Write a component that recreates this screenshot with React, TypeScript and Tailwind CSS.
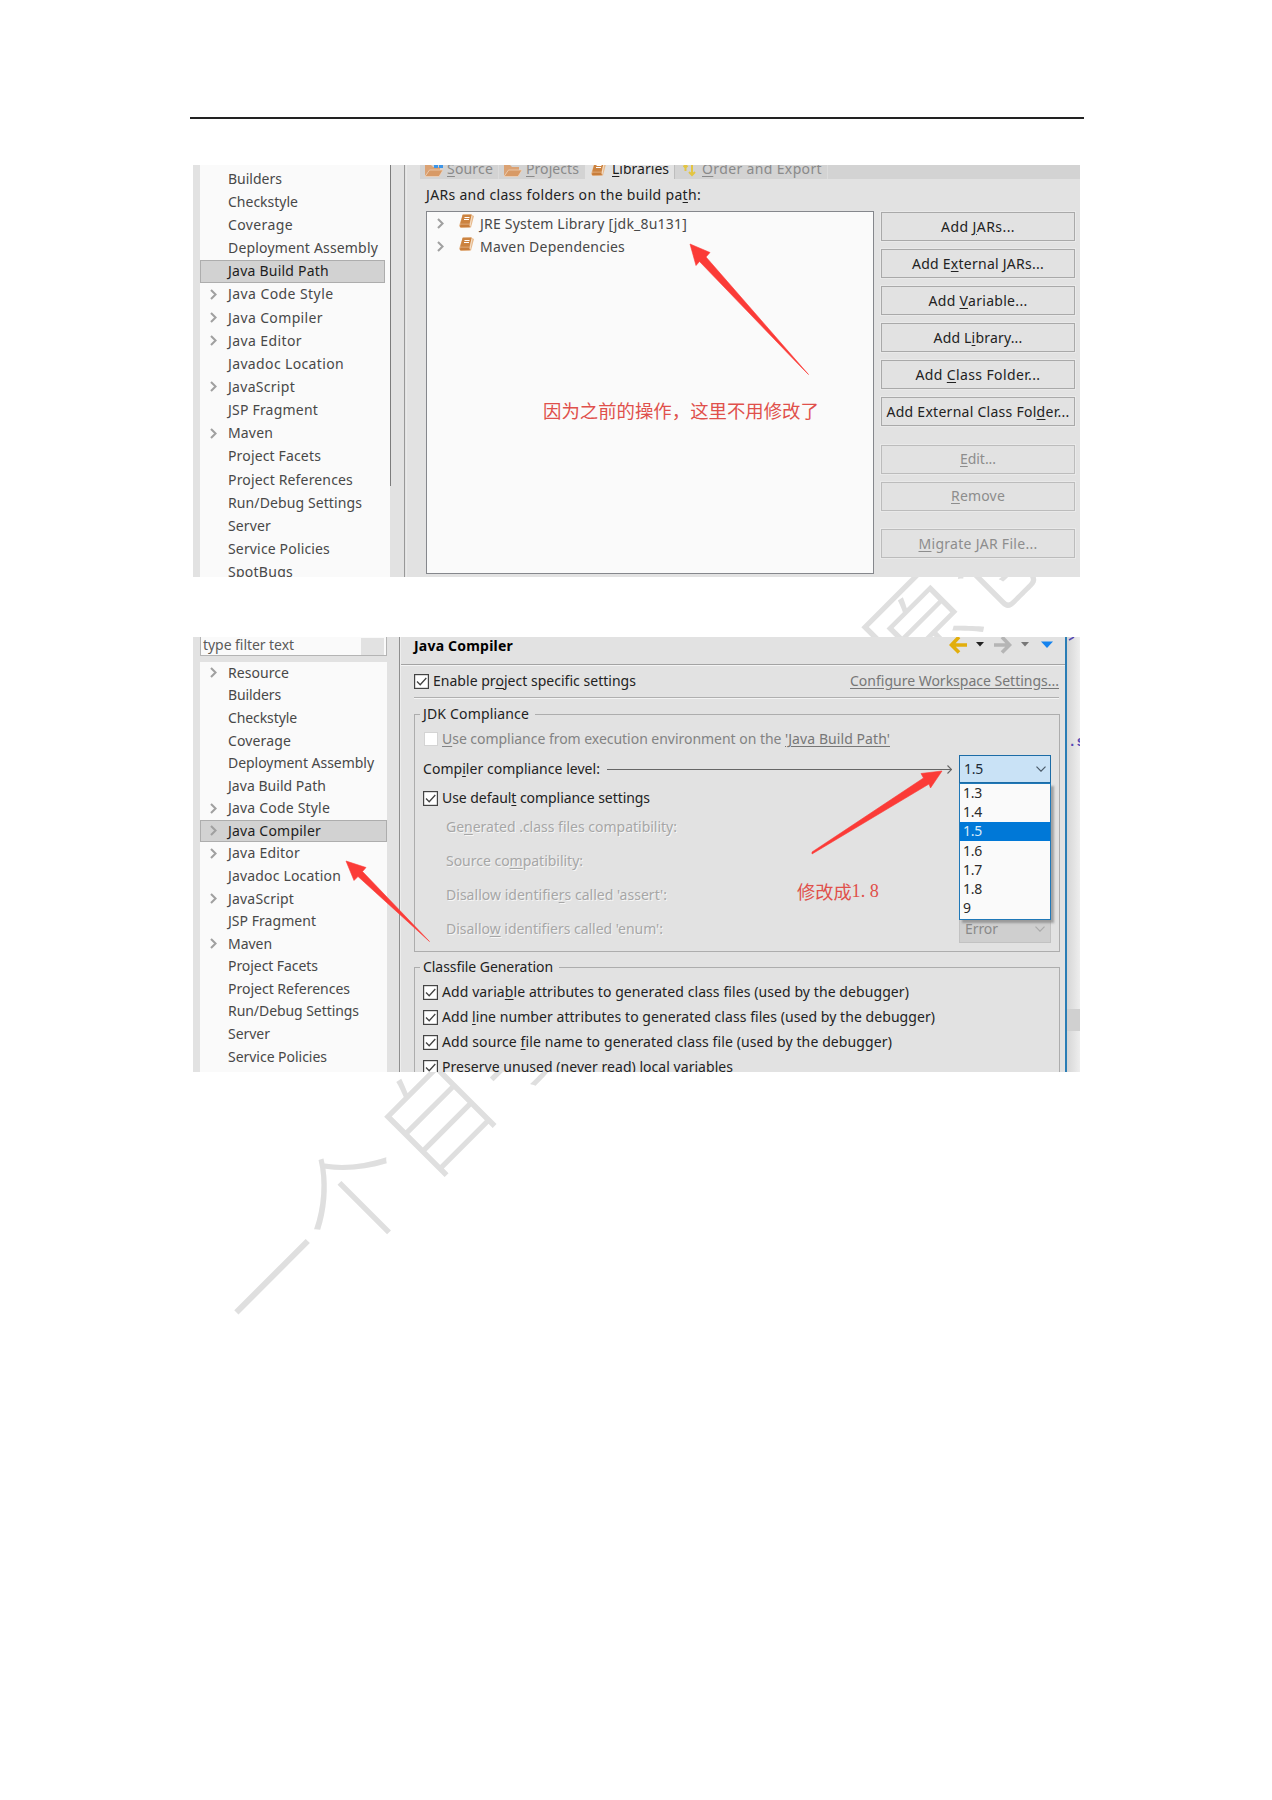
import { useLayoutEffect, useRef, useState } from "react";
import type { ReactNode } from "react";

type LabelProps = { text: string; w: number; className?: string };

/** Text run tracked to a given width; "&" marks the mnemonic letter. */
function Label({ text, w, className = "" }: LabelProps) {
  const ref = useRef<HTMLSpanElement>(null);
  const [spacing, setSpacing] = useState(0);
  const at = text.indexOf("&");
  const length = at < 0 ? text.length : text.length - 1;
  useLayoutEffect(() => {
    if (ref.current) {
      ref.current.style.letterSpacing = "0px";
      const next = (w - ref.current.getBoundingClientRect().width) / length;
      ref.current.style.letterSpacing = `${next}px`;
      setSpacing(next);
    }
  }, [w, length]);
  return (
    <span ref={ref} className={`inline-block whitespace-pre ${className}`} style={{ letterSpacing: `${spacing}px` }}>
      {at < 0 ? (
        text
      ) : (
        <>
          {text.slice(0, at)}
          <span className="underline underline-offset-2">{text[at + 1]}</span>
          {text.slice(at + 2)}
        </>
      )}
    </span>
  );
}

function Chevron() {
  return (
    <svg className="h-[11px] w-[7px] shrink-0" viewBox="0 0 7 11" fill="none" stroke="#a0a0a0" strokeWidth="2.1">
      <path d="M1 1l4.6 4.5L1 10" />
    </svg>
  );
}

function Folder({ badge = false }: { badge?: boolean }) {
  return (
    <svg className="h-4 w-[19px] shrink-0" viewBox="0 0 19 16">
      <path d="M1 4h6l2 2h7v3H6l-5 6z" fill="#dba273" />
      <path d="M5.5 9H19l-4 6.500H1z" fill="#d89a66" stroke="#f0d6bf" strokeWidth=".7" />
      {badge && <path d="M10 3h4v4h-4zM15 3h4v4h-4z" fill="#3d95e8" />}
    </svg>
  );
}

function Book() {
  return (
    <svg className="h-[15px] w-[15px] shrink-0" viewBox="0 0 15 15">
      <path d="M3.500 1L12 .5 15 2l-3 11.500L2 14 0 12z" fill="#e7b98c" />
      <path d="M3.700 .5h9L10.500 9.800H1.300z" fill="#cc8340" />
      <path d="M1.300 10.500h9.500v2.800H1z" fill="#c87d3b" />
      <path d="M5.500 3.500h5M5 5.500h5" stroke="#fff" strokeWidth="1.100" />
      <path d="M13 1.500L11 12" stroke="#f8ead9" strokeWidth=".8" />
    </svg>
  );
}

function Checkbox({ disabled = false }: { disabled?: boolean }) {
  if (disabled) return <span className="ml-px mr-1 size-[14px] shrink-0 border border-[#d4d4d4] bg-white" />;
  return (
    <svg className="mr-1 size-[15px] shrink-0" viewBox="0 0 15 15" fill="none" stroke="#444">
      <rect x=".6" y=".6" width="13.800" height="13.800" fill="#fff" strokeWidth="1.200" />
      <path d="M3 7.500l3.200 3.200L12.300 4" strokeWidth="1.300" />
    </svg>
  );
}

type Item = { t: string; w: number; open?: boolean; sel?: boolean };

const buildTree: Item[] = [
  { t: "Builders", w: 54 },
  { t: "Checkstyle", w: 70 },
  { t: "Coverage", w: 65 },
  { t: "Deployment Assembly", w: 150 },
  { t: "Java Build Path", w: 101, sel: true },
  { t: "Java Code Style", w: 105.5, open: true },
  { t: "Java Compiler", w: 95, open: true },
  { t: "Java Editor", w: 74, open: true },
  { t: "Javadoc Location", w: 116 },
  { t: "JavaScript", w: 67, open: true },
  { t: "JSP Fragment", w: 90 },
  { t: "Maven", w: 45, open: true },
  { t: "Project Facets", w: 93 },
  { t: "Project References", w: 125 },
  { t: "Run/Debug Settings", w: 134 },
  { t: "Server", w: 43 },
  { t: "Service Policies", w: 102 },
  { t: "SpotBugs", w: 65 },
];

const compilerTree: Item[] = [
  { t: "Resource", w: 61, open: true },
  { t: "Builders", w: 53 },
  { t: "Checkstyle", w: 69 },
  { t: "Coverage", w: 63 },
  { t: "Deployment Assembly", w: 146 },
  { t: "Java Build Path", w: 98 },
  { t: "Java Code Style", w: 102, open: true },
  { t: "Java Compiler", w: 93, open: true, sel: true },
  { t: "Java Editor", w: 72, open: true },
  { t: "Javadoc Location", w: 113 },
  { t: "JavaScript", w: 66, open: true },
  { t: "JSP Fragment", w: 88 },
  { t: "Maven", w: 44, open: true },
  { t: "Project Facets", w: 90 },
  { t: "Project References", w: 122 },
  { t: "Run/Debug Settings", w: 131 },
  { t: "Server", w: 42 },
  { t: "Service Policies", w: 99 },
];

function Tree({ items, rowClass, selClass }: { items: Item[]; rowClass: string; selClass: string }) {
  return (
    <ul>
      {items.map((it) => (
        <li
          key={it.t}
          className={`flex items-center border pl-[9px] ${rowClass} ${
            it.sel ? `border-[#adadad] bg-[#d2d2d2] text-[#1d1d1d] ${selClass}` : "border-transparent text-[#484848]"
          }`}
        >
          <span className="flex w-[18px] shrink-0">{it.open && <Chevron />}</span>
          <Label text={it.t} w={it.w} />
        </li>
      ))}
    </ul>
  );
}

const buttonGroups: { t: string; w: number; off?: boolean }[][] = [
  [
    { t: "Add &JARs...", w: 74 },
    { t: "Add E&xternal JARs...", w: 132 },
    { t: "Add &Variable...", w: 99 },
    { t: "Add L&ibrary...", w: 89 },
    { t: "Add &Class Folder...", w: 125 },
    { t: "Add External Class Fol&der...", w: 183 },
  ],
  [
    { t: "&Edit...", w: 36, off: true },
    { t: "&Remove", w: 54, off: true },
  ],
  [{ t: "&Migrate JAR File...", w: 119, off: true }],
];

function BuildPathShot() {
  return (
    <section className="relative flex h-[412px] w-[887px] overflow-hidden bg-[#e2e2e2]">
      <div className="ml-[7px] h-full w-[190px] shrink-0 bg-[#fafafa] pt-[2px]">
        <Tree items={buildTree} rowClass="h-[23.17px]" selClass="mr-[5px]" />
      </div>
      <div className="h-[321px] w-px shrink-0 bg-[#7c7c7c]" />
      <div className="h-full w-[14px] shrink-0 border-r border-[#989898]" />
      <div className="ml-px flex w-full flex-col border-l border-[#e9e9e9] pl-[13px]">
        <div className="flex h-[14px] items-end bg-[#d3d3d3] text-[#8a8a8a]">
          <div className="flex h-[20px] w-[79px] shrink-0 items-center border-r border-[#dcdcdc] pl-[4px]">
            <Folder badge />
            <Label className="ml-1" text="&Source" w={46} />
          </div>
          <div className="flex h-[20px] w-[86px] shrink-0 items-center pl-[4px]">
            <Folder />
            <Label className="ml-1" text="&Projects" w={53} />
          </div>
          <div className="flex h-[20px] w-[90px] shrink-0 items-center border-r border-[#bdbdbd] bg-[#e2e2e2] pl-[6px] text-[#1c1c1c]">
            <Book />
            <Label className="ml-[6px]" text="&Libraries" w={57} />
          </div>
          <div className="flex h-[20px] w-[153px] shrink-0 items-center border-r border-[#dcdcdc] pl-[8px]">
            <svg className="h-[15px] w-[13px] shrink-0" viewBox="0 0 13 15" fill="none" stroke="#e3c542" strokeWidth="2">
              <path d="M2.500 9V3M0.500 5l2-2 2 2M9 3v10M6 10l3 3 3-3" />
            </svg>
            <Label className="ml-[6px]" text="&Order and Export" w={120} />
          </div>
        </div>
        <div className="flex h-[32px] items-center pl-[6px] text-[#222]">
          <Label text="JARs and class folders on the build pa&th:" w={275} />
        </div>
        <div className="flex pl-[6px]">
          <div className="h-[363px] w-[448px] shrink-0 border border-[#85878c] bg-[#fafafa] text-[#484848]">
            {[
              { t: "JRE System Library [jdk_8u131]", w: 207 },
              { t: "Maven Dependencies", w: 145 },
            ].map((r) => (
              <div key={r.t} className="flex h-[23.200px] items-center pl-[10px]">
                <Chevron />
                <span className="-mt-1 ml-[15px] mr-[6px] flex">
                  <Book />
                </span>
                <Label text={r.t} w={r.w} />
              </div>
            ))}
          </div>
          <div className="ml-[7px] mt-[1px] flex w-[194px] shrink-0 flex-col gap-[18.500px]">
            {buttonGroups.map((group) => (
              <div key={group[0].t} className="flex flex-col gap-[8px]">
                {group.map((b) => (
                  <button
                    key={b.t}
                    className={`flex h-[29px] items-center justify-center border outline outline-[#e9e9e9] ${
                      b.off ? "border-[#bcbcbc] text-[#8d8d8d]" : "border-[#a9a9a9] text-[#222]"
                    }`}
                  >
                    <Label text={b.t} w={b.w} />
                  </button>
                ))}
              </div>
            ))}
          </div>
        </div>
      </div>
      <svg className="absolute left-[490px] top-[70px] h-[150px] w-[140px]" viewBox="0 0 140 150">
        <path d="M7 9l20 8.500-4 4.500L125.500 139.500 118 132 16.500 26.500l-3.500 4z" fill="#fb3b37" stroke="#fb3b37" strokeWidth=".6" />
      </svg>
      <p className="absolute left-[350px] top-[231px] whitespace-nowrap font-['Noto_Sans_CJK_SC',sans-serif] text-[18.400px] font-normal leading-[28px] text-[#e0504b]">
        因为之前的操作，这里不用修改了
      </p>
    </section>
  );
}

function Row({ h, children }: { h: string; children: ReactNode }) {
  return <div className={`flex shrink-0 items-center ${h}`}>{children}</div>;
}

const levels = ["1.3", "1.4", "1.5", "1.6", "1.7", "1.8", "9"];

function ComboArrow({ stroke }: { stroke: string }) {
  return (
    <svg className="h-[6px] w-[10px]" viewBox="0 0 10 6" fill="none" stroke={stroke} strokeWidth="1.200">
      <path d="M.5.700L5 5.200 9.500.700" />
    </svg>
  );
}

function ComplianceCombo() {
  return (
    <div className="relative z-10 -mt-px h-[28px] w-[92px] shrink-0">
      <div className="flex h-full items-center justify-between border border-[#1c6ca6] bg-[#c9e2f6] px-[4px] text-[#1c2a36]">
        <Label text="1.5" w={19} />
        <ComboArrow stroke="#4a5a68" />
      </div>
      <div className="absolute left-0 top-[28px] h-[137px] w-[92px] border border-[#1f78b8] bg-[#fafafa] shadow-[3px_3px_2px_#77777799]">
        {levels.map((v) => (
          <div
            key={v}
            className={`flex h-[19.200px] items-center pl-[3px] ${v === "1.5" ? "bg-[#0078d7] text-[#d9ecfb]" : "text-[#2b2b2b]"}`}
          >
            <Label text={v} w={v === "9" ? 8 : 19} />
          </div>
        ))}
      </div>
    </div>
  );
}

const off = "text-[#a6a6a6] [text-shadow:1px_1px_0_#f6f6f6]";

function CompilerShot() {
  return (
    <section className="relative flex h-[435px] w-[887px] overflow-hidden bg-[#e2e2e2]">
      <div className="ml-[7px] flex w-[187px] shrink-0 flex-col">
        <div className="flex h-[19px] items-end justify-between border border-t-0 border-[#b4b4b4] bg-[#fafafa] pl-[2px] pr-[2px] text-[#5a5a5a]">
          <div className="flex h-[21px] items-center">
            <Label text="type filter text" w={91} />
          </div>
          <div className="h-[17px] w-[23px] bg-[#e2e2e2]" />
        </div>
        <div className="mt-[6px] h-[420px] bg-[#fafafa]">
          <div className="-mt-[0.500px]">
            <Tree items={compilerTree} rowClass="h-[22.580px]" selClass="" />
          </div>
        </div>
      </div>
      <div className="ml-[12px] h-full w-[2px] shrink-0 border-l border-r border-l-[#8f8f8f] border-r-[#eeeeee]" />
      <div className="flex w-[666px] shrink-0 flex-col border-r-2 border-[#2a7db5]">
        <header className="flex h-[28px] shrink-0 justify-between border-b border-[#a3a3a3] pl-[13px] pr-[12px] shadow-[0_1px_0_#f4f4f4]">
          <h1 className="-mt-[2px] leading-[22px] text-black">
            <Label className="font-bold" text="Java Compiler" w={99} />
          </h1>
          <svg className="h-[18px] w-[104px]" viewBox="0 0 104 18" fill="none">
            <path d="M18 8H3M10 0L2.500 8l7.500 7.500" stroke="#e2ae0c" strokeWidth="3.600" />
            <path d="M27 5h8l-4 4.500z" fill="#222" />
            <path d="M45 8h15M53 0l7.500 8-7.500 7.500" stroke="#b5b5b5" strokeWidth="3.600" />
            <path d="M72 5h8l-4 4.500z" fill="#777" />
            <path d="M92 4.500h12l-6 6.500z" fill="#1583ee" />
          </svg>
        </header>
        <div className="ml-[13px] mr-[6px] flex h-[33px] shrink-0 items-center justify-between border-b border-[#b0b0b0] text-[#222] shadow-[0_1px_0_#f4f4f4]">
          <div className="flex items-center">
            <Checkbox />
            <Label text="Enable pr&oject specific settings" w={203} />
          </div>
          <Label className="text-[#777] underline underline-offset-2" text="Configure Workspace Settings..." w={209} />
        </div>
        <fieldset className="ml-[13px] mr-[5px] mt-[6px] h-[248px] min-w-0 shrink-0 border border-[#adadad] pl-[8px] pr-[8px]">
          <legend className="-ml-[3px] h-[20px] px-[3px] leading-[20px] text-[#222]">
            <span className="pr-[3px]">
              <Label text="JDK Compliance" w={106} />
            </span>
          </legend>
          <Row h="h-[30px]">
            <Checkbox disabled />
            <Label className="text-[#838383]" text="&Use compliance from execution environment on the " w={343} />
            <Label className="text-[#777] underline underline-offset-2" text="'Java Build Path'" w={105} />
          </Row>
          <Row h="h-[30px]">
            <Label className="text-[#222]" text="Comp&iler compliance level:" w={177} />
            <svg className="ml-[7px] mr-[7px] h-[9px] flex-1" viewBox="0 0 345 9" preserveAspectRatio="xMaxYMid slice" fill="none" stroke="#666" strokeWidth="1.100">
              <path d="M0 4.500h345M340.500.500l4 4-4 4" />
            </svg>
            <ComplianceCombo />
          </Row>
          <Row h="h-[28px]">
            <Checkbox />
            <Label className="text-[#222]" text="Use defaul&t compliance settings" w={208} />
          </Row>
          <div className="pl-[23px]">
            <Row h="h-[30px]">
              <Label className={off} text="Ge&nerated .class files compatibility:" w={231} />
            </Row>
            <Row h="h-[38px]">
              <Label className={off} text="Source co&mpatibility:" w={137} />
            </Row>
            <Row h="h-[30px]">
              <Label className={off} text="Disallow identifie&rs called 'assert':" w={221} />
            </Row>
            <Row h="h-[38px]">
              <Label className={off} text="Disallo&w identifiers called 'enum':" w={217} />
              <div className="ml-auto flex h-[28px] w-[92px] items-center justify-between border border-[#c2c2c2] bg-[#cfcfcf] px-[5px] text-[#8a8a8a]">
                <Label text="Error" w={33} />
                <ComboArrow stroke="#aaaaaa" />
              </div>
            </Row>
          </div>
        </fieldset>
        <fieldset className="ml-[13px] mr-[5px] mt-[5px] h-[140px] min-w-0 shrink-0 border border-[#adadad] pl-[8px]">
          <legend className="-ml-[3px] h-[20px] px-[3px] leading-[20px] text-[#222]">
            <span className="pr-[3px]">
              <Label text="Classfile Generation" w={130} />
            </span>
          </legend>
          <div className="pt-[3px] text-[#222]">
            {[
              { t: "Add varia&ble attributes to generated class files (used by the debugger)", w: 467 },
              { t: "Add &line number attributes to generated class files (used by the debugger)", w: 493 },
              { t: "Add source &file name to generated class file (used by the debugger)", w: 450 },
              { t: "Preserve unused (never read) local variables", w: 291 },
            ].map((r) => (
              <Row key={r.t} h="h-[24.900px]">
                <Checkbox />
                <Label text={r.t} w={r.w} />
              </Row>
            ))}
          </div>
        </fieldset>
      </div>
      <div className="flex w-[13px] flex-col bg-gradient-to-r from-[#d6d6d6] to-[#eeeeee] font-['Liberation_Mono',monospace] font-bold text-[#5348b4]">
        <svg className="h-[4px] w-[9px]" viewBox="0 0 9 4">
          <path d="M2 3l5-3" stroke="#5348b4" strokeWidth="1.500" />
        </svg>
        <span className="mt-[91px] h-[22px] whitespace-nowrap pl-px leading-[20px]">.s</span>
        <div className="mt-[255px] h-[22px] bg-[#d0d0d0]" />
      </div>
      <svg className="absolute left-[145px] top-[215px] h-[100px] w-[100px]" viewBox="0 0 100 100">
        <path d="M8 9l20 6.500-3.500 4L91.500 89.500 20 24.500l-4 4z" fill="#fb3b37" stroke="#fb3b37" strokeWidth=".6" />
      </svg>
      <svg className="absolute left-[610px] top-[125px] h-[100px] w-[150px]" viewBox="0 0 150 100">
        <path d="M139 9l-21 2.500 2.500 4.500L9 90v2L126 22l1.500 4z" fill="#fb3b37" stroke="#fb3b37" strokeWidth=".6" />
      </svg>
      <p className="absolute left-[604px] top-[240px] flex whitespace-pre font-['Noto_Sans_CJK_SC',sans-serif] text-[18.200px] font-normal leading-[28px] text-[#e0504b]">
        修改成<span className="font-['Liberation_Serif',serif]">1. 8</span>
      </p>
    </section>
  );
}

const watermark = ["一", "个", "自", "学", "", "", "", "", "原", "创"];

function Watermark() {
  return (
    <div
      aria-hidden
      className="absolute left-[211px] top-[1215px] flex h-[116px] origin-[58px_58px] -rotate-45 font-['Noto_Sans_CJK_SC',sans-serif] text-[111px] font-light leading-[116px] text-[#dfdfdf]"
    >
      {watermark.map((c, i) => (
        <span key={i} className="w-[114.500px] shrink-0 text-center">
          {c}
        </span>
      ))}
    </div>
  );
}

export default function App() {
  return (
    <main className="relative h-[1800px] w-[1272px] overflow-hidden bg-white font-['Noto_Sans',sans-serif] text-[14px] leading-[20px]">
      <Watermark />
      <div className="relative flex flex-col pl-[193px]">
        <hr className="-ml-[3.500px] mt-[116.500px] h-[2px] w-[894px] border-0 bg-[#222]" />
        <div className="mt-[46.500px]">
          <BuildPathShot />
        </div>
        <div className="mt-[60px]">
          <CompilerShot />
        </div>
      </div>
    </main>
  );
}
